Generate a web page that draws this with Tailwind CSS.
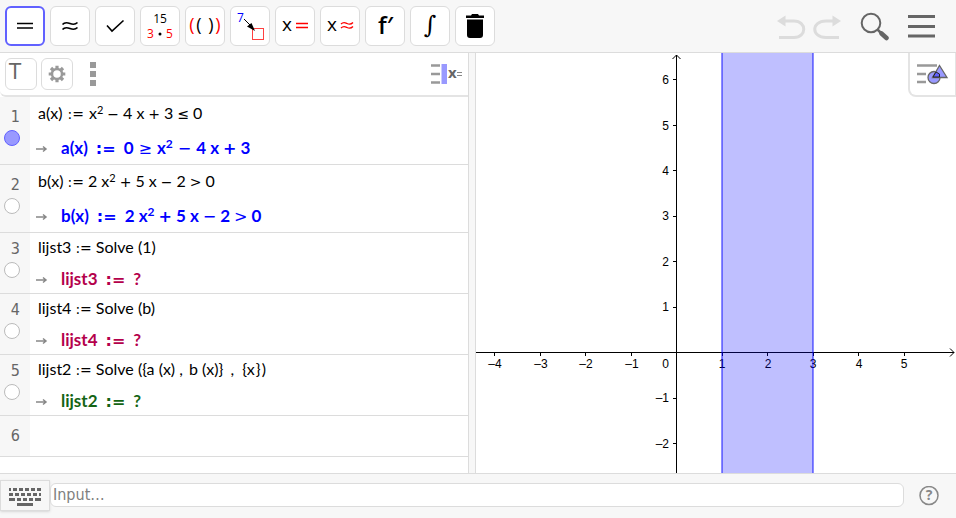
<!DOCTYPE html>
<html lang="nl">
<head>
  <meta charset="UTF-8" />
  <meta name="viewport" content="width=device-width, initial-scale=1.0" />
  <title>CAS</title>
  <script src="https://cdn.jsdelivr.net/npm/@tailwindcss/browser@4"></script>
</head>
<body class="h-screen flex flex-col overflow-hidden bg-white text-black font-['Open_Sans',sans-serif]">

  <!-- Toolbar -->
  <header class="flex items-center justify-between h-[53px] shrink-0 bg-[#f7f7f7] border-b border-[#dcdcdc] pl-[5px] pr-[21px]">
    <div class="flex gap-[5px]">
      <button type="button" aria-label="Evaluate" class="size-10 flex items-center justify-center rounded-md bg-white border-2 border-[#6161ff]">
        <svg class="size-10 shrink-0" viewBox="0 0 40 40" stroke="#000" stroke-width="1.5"><path d="M12 17.5H28M12 22H28" /></svg>
      </button>
      <button type="button" aria-label="Numeric" class="size-10 flex items-center justify-center rounded-md bg-white border border-[#dcdcdc]">
        <svg class="size-10 shrink-0" viewBox="0 0 40 40" fill="none" stroke="#000" stroke-width="1.6"><path d="M12.500 18.500C15 15.500 17.500 16.500 20 17.500S25.500 18.500 27.500 16.500M12.500 23.500C15 20.500 17.500 21.500 20 22.500S25.500 23.500 27.500 21.500" /></svg>
      </button>
      <button type="button" aria-label="Keep input" class="size-10 flex items-center justify-center rounded-md bg-white border border-[#dcdcdc]">
        <svg class="size-10 shrink-0" viewBox="0 0 40 40" fill="none" stroke="#000" stroke-width="1.6"><path d="M12 19.500L17 25L28.500 14.500" /></svg>
      </button>
      <button type="button" aria-label="Factor" class="size-10 flex items-center justify-center rounded-md bg-white border border-[#dcdcdc]">
        <svg class="size-10 shrink-0 text-[12px]" viewBox="0 0 40 40">
          <text x="20" y="17" text-anchor="middle">15</text>
          <text x="7" y="32" fill="#f00">3</text>
          <circle cx="20" cy="28" r="1.500" />
          <text x="26" y="32" fill="#f00">5</text>
        </svg>
      </button>
      <button type="button" aria-label="Expand" class="size-10 flex items-center justify-center rounded-md bg-white border border-[#dcdcdc]">
        <svg class="size-10 shrink-0 text-[18px] font-medium" viewBox="0 0 40 40" text-anchor="middle">
          <text x="7" y="25" fill="#f00">(</text>
          <text x="14" y="25">(</text>
          <text x="26" y="25">)</text>
          <text x="33" y="25" fill="#f00">)</text>
        </svg>
      </button>
      <button type="button" aria-label="Substitute" class="size-10 flex items-center justify-center rounded-md bg-white border border-[#dcdcdc]">
        <svg class="size-10 shrink-0 text-[12px]" viewBox="0 0 40 40">
          <text x="7" y="16" fill="#00f">7</text>
          <rect x="22.500" y="22.500" width="11" height="11" fill="none" stroke="#ff4040" />
          <path d="M14 13L22 21" stroke="#000" />
          <path d="M25 25L17 20.500L21.500 17Z" />
        </svg>
      </button>
      <button type="button" aria-label="Solve" class="size-10 flex items-center justify-center rounded-md bg-white border border-[#dcdcdc]">
        <svg class="size-10 shrink-0 text-[19px] font-medium" viewBox="0 0 40 40">
          <text x="7" y="25">x</text>
          <path d="M21 17.500H33M21 21.500H33" stroke="#f00" stroke-width="1.300" />
        </svg>
      </button>
      <button type="button" aria-label="Solve numerically" class="size-10 flex items-center justify-center rounded-md bg-white border border-[#dcdcdc]">
        <svg class="size-10 shrink-0 text-[19px] font-medium" viewBox="0 0 40 40">
          <text x="7" y="25">x</text>
          <path d="M21 18C23.500 15.500 25 16.500 27 17.500S31 18.500 33 16.500M21 22C23.500 19.500 25 20.500 27 21.500S31 22.500 33 20.500" fill="none" stroke="#f00" stroke-width="1.300" />
        </svg>
      </button>
      <button type="button" aria-label="Derivative" class="size-10 flex items-center justify-center rounded-md bg-white border border-[#dcdcdc]">
        <svg class="size-10 shrink-0 text-[24px] font-semibold" viewBox="0 0 40 40"><text x="13" y="28">f′</text></svg>
      </button>
      <button type="button" aria-label="Integral" class="size-10 flex items-center justify-center rounded-md bg-white border border-[#dcdcdc]">
        <svg class="size-10 shrink-0 text-[24px] font-['DejaVu_Serif',serif]" viewBox="0 0 40 40"><text x="20" y="27" text-anchor="middle">∫</text></svg>
      </button>
      <button type="button" aria-label="Delete" class="size-10 flex items-center justify-center rounded-md bg-white border border-[#dcdcdc]">
        <svg class="size-10 shrink-0" viewBox="0 0 40 40"><path d="M11 9.500H16L17 8H23L24 9.500H29V12H11ZM12 13.500H28V29Q28 32 25 32H15Q12 32 12 29Z" /></svg>
      </button>
    </div>
    <div class="flex items-center">
      <button type="button" aria-label="Undo">
        <svg class="w-[30px] h-7" viewBox="0 0 30 28" fill="none" stroke="#dcdcdc" stroke-width="3"><path d="M7 9H17C30 9 30 25.500 17 25.500H2" /><path d="M0 9L8.500 3.500V14.500Z" fill="#dcdcdc" stroke="none" /></svg>
      </button>
      <button type="button" aria-label="Redo" class="ml-[6px]">
        <svg class="w-[30px] h-7" viewBox="0 0 30 28" fill="none" stroke="#dcdcdc" stroke-width="3"><path d="M21 9H13C-2 9 -2 25.500 13 25.500H26" /><path d="M28 9L19.500 3.500V14.500Z" fill="#dcdcdc" stroke="none" /></svg>
      </button>
      <button type="button" aria-label="Search" class="ml-[17px]">
        <svg class="size-[30px]" viewBox="0 0 30 30" fill="none" stroke="#666"><circle cx="11" cy="12" r="9.300" stroke-width="2" /><path d="M17.500 18.500L21 22" stroke-width="2.500" /><path d="M21.500 22.500L26.500 27" stroke-width="4.500" stroke-linecap="round" /></svg>
      </button>
      <button type="button" aria-label="Menu" class="ml-[18px]">
        <svg class="w-[27px] h-6" viewBox="0 0 27 24" stroke="#666" stroke-width="3"><path d="M0 2.500H27M0 12.500H27M0 22H27" /></svg>
      </button>
    </div>
  </header>

  <main class="flex flex-1 min-h-0">
    <!-- CAS view -->
    <section class="w-[49.06%] shrink-0 flex flex-col border-r border-[#dcdcdc]">
      <div class="flex items-center h-11 shrink-0 border-b-2 border-[#e4e4e4] rounded-bl-md pl-[5px] pr-[5px]">
        <button type="button" aria-label="Text" class="size-8 rounded-md border border-[#dcdcdc] text-[#666] flex justify-start items-start pl-[3px] text-[22px] leading-[26px] font-['DejaVu_Sans_Condensed','DejaVu_Sans',sans-serif]">T</button>
        <button type="button" aria-label="Settings" class="ml-1 size-8 rounded-md border border-[#dcdcdc] flex items-center justify-center">
          <svg class="size-[18px]" viewBox="-9 -9 18 18" fill="none" stroke="#999"><circle r="5" stroke-width="2.500" /><path d="M0 -5.500V-8.300M0 5.500V8.300M-5.500 0H-8.300M5.500 0H8.300M4 4L6 6M-4 -4L-6 -6M4 -4L6 -6M-4 4L-6 6" stroke-width="3.200" /></svg>
        </button>
        <button type="button" aria-label="More" class="ml-[17px]">
          <svg class="w-[6px] h-6" viewBox="0 0 6 24" fill="#999"><path d="M0 0H6V6H0ZM0 9H6V15H0ZM0 18H6V24H0Z" /></svg>
        </button>
        <button type="button" aria-label="Stylebar" class="ml-auto">
          <svg class="w-8 h-5 text-[15px] font-bold overflow-visible" viewBox="0 0 32 20"><path d="M0 1.500H9M0 10H9M0 18.500H9" stroke="#999" stroke-width="2.500" /><rect x="10.500" width="5.500" height="20" fill="#99f" /><text x="17" y="14" fill="#666">x</text><path d="M26 8.500H31M26 11.500H31" stroke="#888" /></svg>
        </button>
      </div>

      <ol class="text-[16px] leading-5 font-['Lato',sans-serif]">
        <li class="flex h-[68px] border-b border-[#dcdcdc]">
          <div class="w-[30px] shrink-0 bg-[#f7f7f7] pt-[10px] text-[#666] font-['DejaVu_Sans_Condensed','DejaVu_Sans',sans-serif]">
            <div class="text-right pr-[10px]">1</div>
            <button type="button" aria-label="Hide 1" class="block ml-1 mt-[3px] size-4 rounded-full border border-[#6161ff] bg-[#99f]"></button>
          </div>
          <div class="pl-2 pt-[6px]">
            <div class="h-5 whitespace-pre">a(x)<span class="mx-[5px] text-[14px] font-['DejaVu_Sans',sans-serif]">:=</span>x<sup class="text-[11px]">2</sup><span class="mx-1 text-[14px] font-['DejaVu_Sans',sans-serif]">−</span>4 x<span class="mx-1 text-[14px] font-['DejaVu_Sans',sans-serif]">+</span>3<span class="mx-1 text-[14px] font-['DejaVu_Sans',sans-serif]">≤</span>0</div>
            <div class="flex mt-[15px] text-[17px] font-bold text-[#00f]">
              <svg class="w-[23px] h-5 overflow-visible" viewBox="0 0 23 20" fill="none" stroke="#888" stroke-width="1.500"><path d="M-2 11H8M5 8.500L8 11L5 13.500" /></svg>
              <span class="h-5 whitespace-pre">a(x)<span class="mx-2 text-[16px] font-['DejaVu_Sans',sans-serif]">:=</span>0<span class="mx-[5px] text-[16px] font-['DejaVu_Sans',sans-serif] font-normal">≥</span>x<sup class="text-[12px]">2</sup><span class="mx-[5px] text-[16px] font-['DejaVu_Sans',sans-serif] font-normal">−</span>4 x<span class="mx-1 text-[16px] font-['DejaVu_Sans',sans-serif]">+</span>3</span>
            </div>
          </div>
        </li>
        <li class="flex h-[68px] border-b border-[#dcdcdc]">
          <div class="w-[30px] shrink-0 bg-[#f7f7f7] pt-[10px] text-[#666] font-['DejaVu_Sans_Condensed','DejaVu_Sans',sans-serif]">
            <div class="text-right pr-[10px]">2</div>
            <button type="button" aria-label="Show 2" class="block ml-1 mt-[3px] size-4 rounded-full border border-[#bbb] bg-white"></button>
          </div>
          <div class="pl-2 pt-[6px]">
            <div class="h-5 whitespace-pre">b(x)<span class="mx-1 text-[14px] font-['DejaVu_Sans',sans-serif]">:=</span>2 x<sup class="text-[11px]">2</sup><span class="mx-1 text-[14px] font-['DejaVu_Sans',sans-serif]">+</span>5 x<span class="mx-1 text-[14px] font-['DejaVu_Sans',sans-serif]">−</span>2<span class="mx-1 text-[14px] font-['DejaVu_Sans',sans-serif]">&gt;</span>0</div>
            <div class="flex mt-[15px] text-[17px] font-bold text-[#00f]">
              <svg class="w-[23px] h-5 overflow-visible" viewBox="0 0 23 20" fill="none" stroke="#888" stroke-width="1.500"><path d="M-2 11H8M5 8.500L8 11L5 13.500" /></svg>
              <span class="h-5 whitespace-pre">b(x)<span class="mx-2 text-[16px] font-['DejaVu_Sans',sans-serif]">:=</span>2 x<sup class="text-[12px]">2</sup><span class="mx-1 text-[16px] font-['DejaVu_Sans',sans-serif]">+</span>5 x<span class="mx-1 text-[16px] font-['DejaVu_Sans',sans-serif] font-normal">−</span>2<span class="mx-1 text-[16px] font-['DejaVu_Sans',sans-serif] font-normal">&gt;</span>0</span>
            </div>
          </div>
        </li>
        <li class="flex h-[61px] border-b border-[#dcdcdc]">
          <div class="w-[30px] shrink-0 bg-[#f7f7f7] pt-[6px] text-[#666] font-['DejaVu_Sans_Condensed','DejaVu_Sans',sans-serif]">
            <div class="text-right pr-[10px]">3</div>
            <button type="button" aria-label="Show 3" class="block ml-1 mt-[3px] size-4 rounded-full border border-[#bbb] bg-white"></button>
          </div>
          <div class="pl-2 pt-1">
            <div class="h-5 whitespace-pre">lijst3<span class="mx-1 text-[14px] font-['DejaVu_Sans',sans-serif]">:=</span>Solve (1)</div>
            <div class="flex mt-3 text-[17px] font-bold text-[#b4004b]">
              <svg class="w-[23px] h-5 overflow-visible" viewBox="0 0 23 20" fill="none" stroke="#888" stroke-width="1.500"><path d="M-2 11H8M5 8.500L8 11L5 13.500" /></svg>
              <span class="h-5 whitespace-pre">lijst3<span class="mx-2 text-[16px] font-['DejaVu_Sans',sans-serif]">:=</span>?</span>
            </div>
          </div>
        </li>
        <li class="flex h-[61px] border-b border-[#dcdcdc]">
          <div class="w-[30px] shrink-0 bg-[#f7f7f7] pt-[6px] text-[#666] font-['DejaVu_Sans_Condensed','DejaVu_Sans',sans-serif]">
            <div class="text-right pr-[10px]">4</div>
            <button type="button" aria-label="Show 4" class="block ml-1 mt-[3px] size-4 rounded-full border border-[#bbb] bg-white"></button>
          </div>
          <div class="pl-2 pt-1">
            <div class="h-5 whitespace-pre">lijst4<span class="mx-1 text-[14px] font-['DejaVu_Sans',sans-serif]">:=</span>Solve (b)</div>
            <div class="flex mt-3 text-[17px] font-bold text-[#b4004b]">
              <svg class="w-[23px] h-5 overflow-visible" viewBox="0 0 23 20" fill="none" stroke="#888" stroke-width="1.500"><path d="M-2 11H8M5 8.500L8 11L5 13.500" /></svg>
              <span class="h-5 whitespace-pre">lijst4<span class="mx-2 text-[16px] font-['DejaVu_Sans',sans-serif]">:=</span>?</span>
            </div>
          </div>
        </li>
        <li class="flex h-[61px] border-b border-[#dcdcdc]">
          <div class="w-[30px] shrink-0 bg-[#f7f7f7] pt-[6px] text-[#666] font-['DejaVu_Sans_Condensed','DejaVu_Sans',sans-serif]">
            <div class="text-right pr-[10px]">5</div>
            <button type="button" aria-label="Show 5" class="block ml-1 mt-[3px] size-4 rounded-full border border-[#bbb] bg-white"></button>
          </div>
          <div class="pl-2 pt-1">
            <div class="h-5 whitespace-pre">lijst2<span class="mx-1 text-[14px] font-['DejaVu_Sans',sans-serif]">:=</span>Solve ({a (x) <span class="mr-[2px]">,</span> b (x)<span class="mr-[3px]">}</span> <span class="mr-1">,</span> {x<span class="mx-px">}</span>)</div>
            <div class="flex mt-3 text-[17px] font-bold text-[#146414]">
              <svg class="w-[23px] h-5 overflow-visible" viewBox="0 0 23 20" fill="none" stroke="#888" stroke-width="1.500"><path d="M-2 11H8M5 8.500L8 11L5 13.500" /></svg>
              <span class="h-5 whitespace-pre">lijst2<span class="mx-2 text-[16px] font-['DejaVu_Sans',sans-serif]">:=</span>?</span>
            </div>
          </div>
        </li>
        <li class="flex h-[41px] border-b border-[#dcdcdc]">
          <div class="w-[30px] shrink-0 bg-[#f7f7f7] pt-[10px] text-[#666] font-['DejaVu_Sans_Condensed','DejaVu_Sans',sans-serif]">
            <div class="text-right pr-[10px]">6</div>
          </div>
        </li>
      </ol>
    </section>

    <div class="w-[7px] shrink-0 bg-[#f7f7f7] border-r border-[#dcdcdc]"></div>

    <!-- Graphics view -->
    <section class="relative flex-1 min-w-0">
      <svg class="block w-full h-full text-[12px] font-['Liberation_Sans',sans-serif]" viewBox="0 0 480 420" preserveAspectRatio="xMidYMid slice">
        <g stroke="#000" fill="none" shape-rendering="crispEdges">
          <path d="M0 299.500H478M200.500 2V420" />
          <path d="M18.500 300V303M64.500 300V303M109.500 300V303M155.500 300V303M246.500 300V303M291.500 300V303M337.500 300V303M382.500 300V303M428.500 300V303" />
          <path d="M197 26.500H200M197 72.500H200M197 117.500H200M197 163.500H200M197 208.500H200M197 254.500H200M197 345.500H200M197 390.500H200" />
        </g>
        <path d="M474 295.500L478 299.500L474 303.500M196.500 6L200.500 2L204.500 6" stroke="#000" fill="none" />
        <g text-anchor="middle">
          <text x="19" y="315">–4</text>
          <text x="65" y="315">–3</text>
          <text x="110" y="315">–2</text>
          <text x="156" y="315">–1</text>
          <text x="246" y="315">1</text>
          <text x="292" y="315">2</text>
          <text x="337" y="315">3</text>
          <text x="383" y="315">4</text>
          <text x="428" y="315">5</text>
        </g>
        <g text-anchor="end">
          <text x="193" y="315">0</text>
          <text x="193" y="31">6</text>
          <text x="193" y="77">5</text>
          <text x="193" y="122">4</text>
          <text x="193" y="167">3</text>
          <text x="193" y="213">2</text>
          <text x="193" y="258">1</text>
          <text x="193" y="349">–1</text>
          <text x="193" y="395">–2</text>
        </g>
        <!-- 1 <= x <= 3 -->
        <rect x="246" y="0" width="91" height="420" fill="#00f" fill-opacity="0.25" />
        <path d="M246 0V420M337 0V420" stroke="#00f" stroke-opacity="0.500" stroke-width="1.800" />
      </svg>
      <button type="button" aria-label="Graphics stylebar" class="absolute top-0 right-0 w-12 h-11 bg-white border-l-2 border-b-2 border-r border-[#e4e4e4] rounded-bl-lg">
        <svg class="ml-[7px] w-8 h-6" viewBox="0 0 32 24" stroke="#999" stroke-width="2.500"><path d="M0 3.500H20M0 12H9M0 20H9" /><circle cx="17" cy="15.500" r="6" fill="#99f" stroke="#666" stroke-width="1.300" /><path d="M22.500 3.500L30 15.500H15.500Z" fill="#99f" stroke="#666" stroke-width="1.300" /><path d="M19 10L22.500 12V15H16Z" fill="#6161ff" stroke="#222" stroke-width="1" /></svg>
      </button>
    </section>
  </main>

  <!-- Input bar -->
  <footer class="flex items-center shrink-0 bg-[#f7f7f7] border-t border-[#dcdcdc] pt-[6px] pb-[7px] pr-[17px]">
    <button type="button" aria-label="Keyboard" class="w-[50px] h-[31px] shrink-0 border border-[#dcdcdc] flex items-center justify-center shadow-sm">
      <svg class="w-8 h-[18px] mt-[2px]" viewBox="0 0 32 18" stroke="#666" stroke-width="3"><path d="M0 1.500H32" stroke-dasharray="2 2 4 2 4 2 4 2 4 2 4" /><path d="M0 6.500H32" stroke-dasharray="4 2" /><path d="M0 11.500H32" stroke-dasharray="6 2 4 2 4 2 4 2 6" /><path d="M8 16.500H24" /></svg>
    </button>
    <input type="text" aria-label="Input" placeholder="Input…" class="flex-1 min-w-0 h-6 mb-px rounded-md border border-[#dcdcdc] bg-white px-[2px] text-[16px] placeholder-[#808080] font-['DejaVu_Sans_Condensed','DejaVu_Sans',sans-serif]" />
    <button type="button" aria-label="Help" class="ml-[15px]">
      <svg class="size-5 text-[14px] font-bold" viewBox="0 0 20 20"><circle cx="10" cy="9.500" r="9" fill="none" stroke="#888" stroke-width="1.500" /><text x="10" y="14" text-anchor="middle" fill="#888">?</text></svg>
    </button>
  </footer>
</body>
</html>
